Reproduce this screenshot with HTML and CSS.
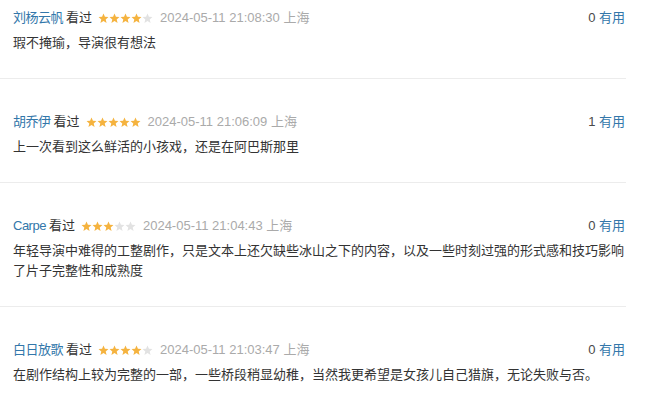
FILE: index.html
```html
<!DOCTYPE html>
<html lang="zh-CN">
<head>
    <meta charset="UTF-8">
    <title>短评</title>
    <link rel="stylesheet" href="styles.css">
</head>
<body>
    <svg width="0" height="0" class="defs">
        <symbol id="star" viewBox="0 0 20 20">
            <polygon points="10,1 12.6,7 19,7.4 14,11.6 15.6,18 10,14.5 4.4,18 6,11.6 1,7.4 7.4,7"/>
        </symbol>
    </svg>

    <!-- comment list -->
    <div class="comments">
        <div class="comment">
            <div class="comment-info">
                <span class="meta">
                    <a class="user" href="#">刘杨云帆</a>
                    <span class="watched">看过</span>
                    <span class="stars">
                        <svg class="on"><use href="#star"/></svg><svg class="on"><use href="#star"/></svg><svg class="on"><use href="#star"/></svg><svg class="on"><use href="#star"/></svg><svg class="off"><use href="#star"/></svg>
                    </span>
                    <span class="time">2024-05-11 21:08:30 上海</span>
                </span>
                <span class="votes">0 <a href="#">有用</a></span>
            </div>
            <p class="short">瑕不掩瑜，导演很有想法</p>
        </div>

        <div class="comment">
            <div class="comment-info">
                <span class="meta">
                    <a class="user" href="#">胡乔伊</a>
                    <span class="watched">看过</span>
                    <span class="stars">
                        <svg class="on"><use href="#star"/></svg><svg class="on"><use href="#star"/></svg><svg class="on"><use href="#star"/></svg><svg class="on"><use href="#star"/></svg><svg class="on"><use href="#star"/></svg>
                    </span>
                    <span class="time">2024-05-11 21:06:09 上海</span>
                </span>
                <span class="votes">1 <a href="#">有用</a></span>
            </div>
            <p class="short">上一次看到这么鲜活的小孩戏，还是在阿巴斯那里</p>
        </div>

        <div class="comment">
            <div class="comment-info">
                <span class="meta">
                    <a class="user" href="#">Carpe</a>
                    <span class="watched">看过</span>
                    <span class="stars">
                        <svg class="on"><use href="#star"/></svg><svg class="on"><use href="#star"/></svg><svg class="on"><use href="#star"/></svg><svg class="off"><use href="#star"/></svg><svg class="off"><use href="#star"/></svg>
                    </span>
                    <span class="time">2024-05-11 21:04:43 上海</span>
                </span>
                <span class="votes">0 <a href="#">有用</a></span>
            </div>
            <p class="short">年轻导演中难得的工整剧作，只是文本上还欠缺些冰山之下的内容，以及一些时刻过强的形式感和技巧影响了片子完整性和成熟度</p>
        </div>

        <div class="comment">
            <div class="comment-info">
                <span class="meta">
                    <a class="user" href="#">白日放歌</a>
                    <span class="watched">看过</span>
                    <span class="stars">
                        <svg class="on"><use href="#star"/></svg><svg class="on"><use href="#star"/></svg><svg class="on"><use href="#star"/></svg><svg class="on"><use href="#star"/></svg><svg class="off"><use href="#star"/></svg>
                    </span>
                    <span class="time">2024-05-11 21:03:47 上海</span>
                </span>
                <span class="votes">0 <a href="#">有用</a></span>
            </div>
            <p class="short">在剧作结构上较为完整的一部，一些桥段稍显幼稚，当然我更希望是女孩儿自己猎旗，无论失败与否。</p>
        </div>
    </div>
</body>
</html>
```

FILE: styles.css
```css
body {
    margin: 0;
    background: #fff;
    font-family: "Liberation Sans", "Noto Sans CJK SC", sans-serif;
    font-size: 13px;
    color: #494949;
}
a {
    text-decoration: none;
    color: #37a;
}
.defs {
    position: absolute;
}

/* comment list */
.comments {
    width: 626px;
}
.comment {
    padding: 33px 0 25px 13px;
    border-top: 1px solid #ececec;
}
.comment:first-child {
    padding-top: 8px;
    border-top: none;
}
.comment-info {
    display: flex;
    justify-content: space-between;
    align-items: center;
    height: 20px;
    line-height: 20px;
    padding-right: 1px;
}
.meta {
    display: flex;
    align-items: center;
}
.user {
    margin-right: 3px;
    letter-spacing: -0.5px;
}
.watched {
    color: #333;
    margin-right: 6px;
}
.stars {
    display: flex;
    margin-right: 7px;
}
.stars svg {
    width: 11px;
    height: 11px;
}
.stars .on {
    fill: #f5b33f;
}
.stars .off {
    fill: #e2e2e2;
}
.time {
    color: #aaa;
}
.votes {
    color: #494949;
}
.short {
    margin: 5px 0 0;
    line-height: 20px;
    color: #333;
}
```
